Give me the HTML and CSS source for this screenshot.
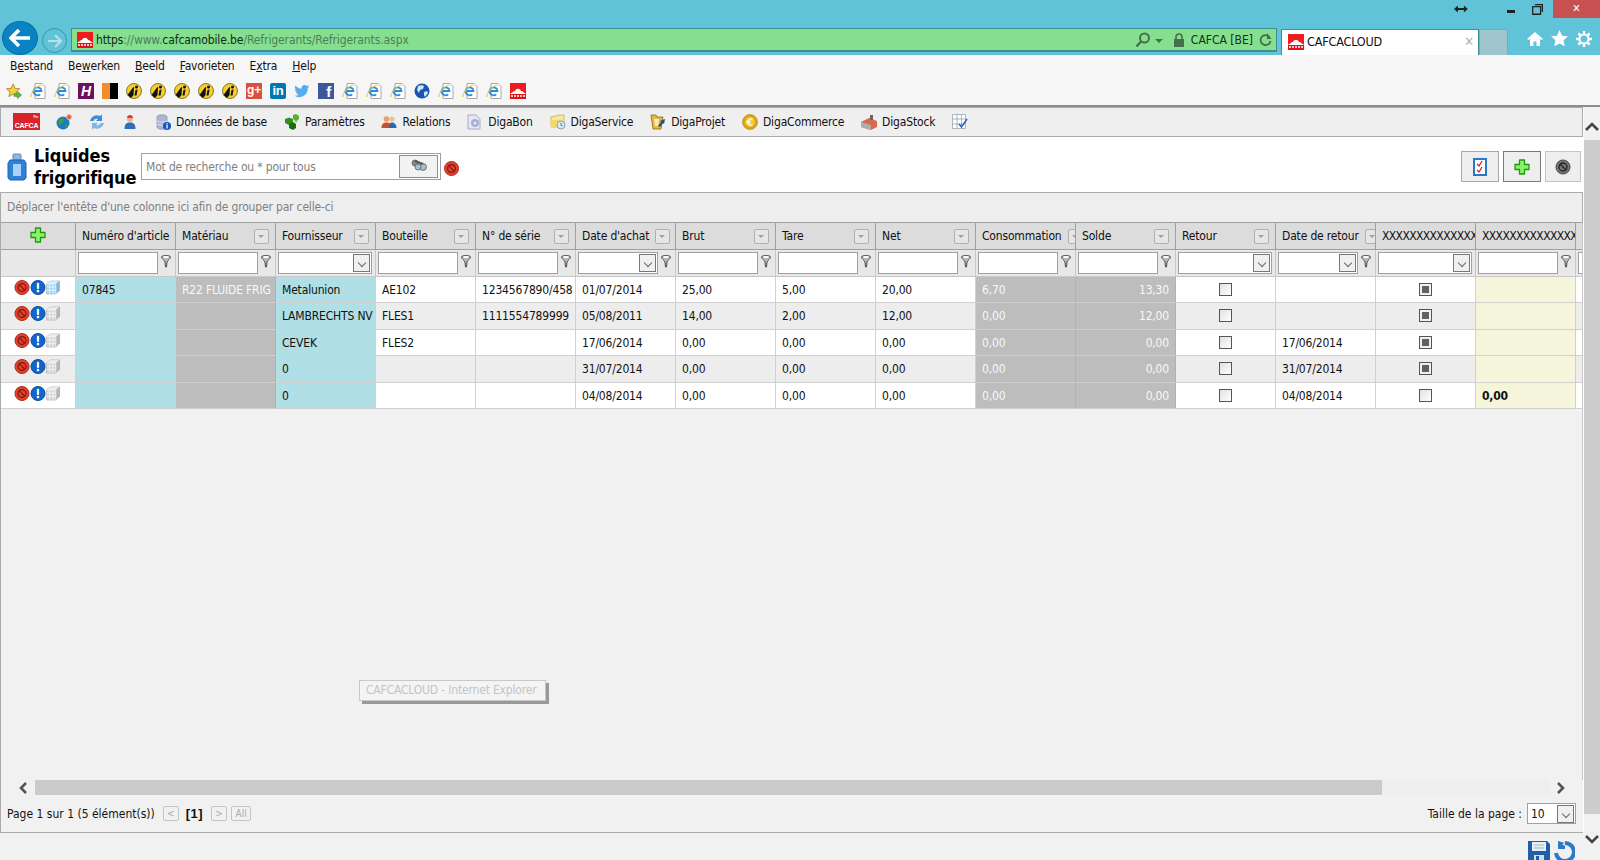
FILE: index.html
```html
<!DOCTYPE html>
<html lang="nl">
<head>
  <meta charset="UTF-8" />
  <title>CAFCACLOUD - Internet Explorer</title>
  <link rel="stylesheet" href="styles.css">
</head>
<body>
  <svg class="defs" width="0" height="0">
    <symbol id="cafca" viewBox="0 0 16 16"><rect width="16" height="16" fill="#ee1c1c"/><path d="M0 11c2-1 3-3 5-3 1-3 5-3 6 0 2 0 3 2 5 3z" fill="#fff"/><rect y="11" width="16" height="5" fill="#e01414"/><path d="M1 13h14" stroke="#fff" stroke-width="1.500" stroke-dasharray="2 1"/></symbol>
    <symbol id="ie" viewBox="0 0 16 16"><path d="M5 .5h7l3 3v12H5z" fill="#fff" stroke="#aaa"/><path d="M3.500 8h8a4 4 0 1 0-1.300 3.300" fill="none" stroke="#2a8fe0" stroke-width="1.800"/><path d="M1 14C0 11 6 3 11 2" fill="none" stroke="#f1c232" stroke-width="1.200"/></symbol>
    <symbol id="disc" viewBox="0 0 16 16"><circle cx="8" cy="8" r="7.500" fill="#f3cd2d" stroke="#8a7a20"/><path d="M1.500 12L7 4.500c1-1 1.500-.5 1 .5L7.500 12 5 15z" fill="#111"/><circle cx="10.500" cy="4" r="1.500" fill="#111"/><path d="M9.500 7l2-.5-1 6h-2z" fill="#111"/></symbol>
    <symbol id="starfav" viewBox="0 0 18 18"><path d="M8 1l2.200 5 5.300.5-4 3.500 1.200 5.300L8 12.500l-4.700 2.800L4.500 10l-4-3.500L5.800 6z" fill="#f3d04a" stroke="#b58a20"/><path d="M9 12h4v-2.500l4.500 4-4.500 4V15H9z" fill="#54b948" stroke="#2e8b2e" stroke-width=".6"/></symbol>
    <symbol id="globe" viewBox="0 0 16 16"><circle cx="8" cy="8" r="7.500" fill="#1a56b0"/><path d="M4 3c2-1 5-1 6 0L9 6 6 7 5 10 3 7zM10 9l3-1 1 2-3 4-1-2z" fill="#cfe6fa"/></symbol>
    <symbol id="netdot" viewBox="0 0 16 16"><circle cx="7" cy="9" r="6.500" fill="#1f7ac0"/><path d="M3 6c2-2 4-2 5-1L7 8 5 9 4 11 2 9zM9 11l2-1v2l-2 2z" fill="#3aa33a"/><circle cx="13" cy="3" r="2.500" fill="#e0603a" stroke="#f5b090"/></symbol>
    <symbol id="sync" viewBox="0 0 16 16"><path d="M1 7a7 7 0 0 1 10-5l2-1.500V7H7l2-2A3.500 3.500 0 0 0 4.500 7z" fill="#3b8ed8"/><path d="M15 9a7 7 0 0 1-10 5l-2 1.500V9h6l-2 2A3.500 3.500 0 0 0 11.500 9z" fill="#7bb8ea"/></symbol>
    <symbol id="person" viewBox="0 0 16 16"><circle cx="8" cy="5" r="3" fill="#f0b090"/><path d="M5 4c0-4 6-4 6 0z" fill="#d8402a"/><path d="M2.500 15c0-5 2-6.500 5.500-6.500s5.500 1.500 5.500 6.500z" fill="#2c6ebc"/></symbol>
    <symbol id="db" viewBox="0 0 16 16"><path d="M2 3c0-3 10-3 10 0v10c0 3-10 3-10 0z" fill="#a9b4d6" stroke="#7c86ac" stroke-width=".6"/><path d="M2 7c2 1.500 8 1.500 10 0M2 10c2 1.500 8 1.500 10 0" fill="none" stroke="#eef" stroke-width=".8"/><circle cx="12" cy="12" r="4" fill="#1457b8"/><rect x="11.400" y="11" width="1.300" height="3.500" fill="#fff"/><rect x="11.400" y="9.200" width="1.300" height="1.200" fill="#fff"/></symbol>
    <symbol id="cubes" viewBox="0 0 16 16"><path d="M9 1l3-1 3 2v3l-3 2-3-2z" fill="#58b030"/><path d="M1 5l4-1.500L9 5v4l-4 2-4-2z" fill="#2f8f20"/><path d="M5 10l4-2 3 2v4l-3 2-4-2z" fill="#1c6e16"/><path d="M9 5l3 2 3-2-3 4z" fill="#8ad050"/></symbol>
    <symbol id="people" viewBox="0 0 16 16"><circle cx="5.500" cy="5" r="2.800" fill="#e8a070"/><path d="M.5 14c0-4 2-5.500 5-5.500s5 1.500 5 5.500z" fill="#c8502a"/><circle cx="11" cy="5" r="2.500" fill="#f0c090"/><path d="M8 14c0-4 1-5.500 3-5.500s4.500 1.500 4.500 5.500z" fill="#2d68b8"/></symbol>
    <symbol id="docgear" viewBox="0 0 16 16"><path d="M1 1h8l4 4v10H1z" fill="#e4e8f4" stroke="#8a94b4" stroke-width=".7"/><circle cx="8" cy="9" r="4" fill="#a8aed0"/><circle cx="8" cy="9" r="1.500" fill="#e4e8f4"/></symbol>
    <symbol id="folderclock" viewBox="0 0 16 16"><path d="M1 3l8-2h5v10H1z" fill="#f5e6a0" stroke="#c9a83a" stroke-width=".7"/><path d="M0 6h12v8H1z" fill="#f3d76c"/><circle cx="11" cy="11" r="4" fill="#dbe8f5" stroke="#6d8fb5" stroke-width=".8"/><path d="M11 9v2.200l1.500.8" fill="none" stroke="#456" stroke-width=".8"/></symbol>
    <symbol id="folderarrow" viewBox="0 0 16 16"><path d="M1 1h5l1 2h6l-2 12H3z" fill="#e8b83e" stroke="#8a6a18" stroke-width=".8"/><path d="M4 5h5l-1 7H5z" fill="#f7eec0"/><path d="M8 12l3-4-1-1 5-2-1 5-1-1-3 4z" fill="#24508c"/></symbol>
    <symbol id="coin" viewBox="0 0 16 16"><circle cx="8" cy="8" r="7.500" fill="#d9a514" stroke="#b08010" stroke-width=".6"/><circle cx="8" cy="8" r="5" fill="#f0c838"/><path d="M10.500 5.500a3 3 0 1 0 0 5M4.500 7.200h4.500M4.500 8.800h4" fill="none" stroke="#fff" stroke-width="1.100"/></symbol>
    <symbol id="factory" viewBox="0 0 16 16"><path d="M0 8l8-4 8 3v6l-6 3-10-3z" fill="#d8694e"/><path d="M0 8l10 3v5L0 13z" fill="#aeaeae"/><rect x="9" y="1" width="3" height="5" fill="#666"/></symbol>
    <symbol id="gridcheck" viewBox="0 0 16 16"><path d="M.5.500h13v14H.5zM.5 5h13M.5 10h13M5 .5v14M9.500.5v14" fill="#fff" stroke="#8e96aa" stroke-width=".7"/><path d="M7 10l2.500 3L15 5" fill="none" stroke="#2a62c8" stroke-width="1.600"/></symbol>
    <symbol id="stop" viewBox="0 0 16 16"><circle cx="8" cy="8" r="7.500" fill="#e5402c" stroke="#a8261a"/><circle cx="8" cy="8" r="4.200" fill="none" stroke="#7c1a10" stroke-width="1.300"/><path d="M5 5l6 6" stroke="#7c1a10" stroke-width="1.300"/></symbol>
    <symbol id="stopgrey" viewBox="0 0 16 16"><circle cx="8" cy="8" r="7" fill="#777" stroke="#444"/><circle cx="8" cy="8" r="4" fill="none" stroke="#222" stroke-width="1.300"/><path d="M5 5l6 6" stroke="#222" stroke-width="1.300"/></symbol>
    <symbol id="info" viewBox="0 0 16 16"><circle cx="8" cy="8" r="7.500" fill="#0f66cc" stroke="#0b4aa0"/><rect x="6.800" y="3" width="2.400" height="6.500" rx="1" fill="#fff"/><circle cx="8" cy="11.800" r="1.400" fill="#fff"/></symbol>
    <symbol id="cube" viewBox="0 0 16 16"><path d="M1 4l4-3h10v10l-4 4H1z" fill="currentColor" stroke="#aaa" stroke-width=".6"/><path d="M1 4l4-3h10l-4 3z" fill="#fff" opacity=".5"/><path d="M11 4l4-3v10l-4 4z" fill="#000" opacity=".14"/><path d="M1 4h10v11M4.500 4v11M8 4v11M1 7.500h10M1 11h10" fill="none" stroke="#fff" stroke-width=".7"/></symbol>
    <symbol id="plus" viewBox="0 0 16 16"><path d="M5.500 1h5v4.500H15v5h-4.500V15h-5v-4.500H1v-5h4.500z" fill="#8cf06c" stroke="#1e9a12" stroke-width="1.300" stroke-linejoin="round"/></symbol>
    <symbol id="funnel" viewBox="0 0 10 13"><path d="M.5 2c0-2 9-2 9 0 0 2-3 3-3.500 5L5.500 12h-1L4 7C3.500 5 .5 4 .5 2z" fill="#bbb" stroke="#444" stroke-width=".9"/><ellipse cx="5" cy="2" rx="3" ry="1" fill="#fff"/></symbol>
    <symbol id="bottle" viewBox="0 0 20 28"><rect x="6" y="1" width="8" height="6" rx="1" fill="#8fb6e0" stroke="#5a8cc4"/><path d="M3 7h14l2 3v15l-2 2H3l-2-2V10z" fill="#2d82d8" stroke="#1a62b0"/><rect x="6" y="11" width="8" height="12" fill="#a8d2f6"/></symbol>
    <symbol id="binoc" viewBox="0 0 16 12"><circle cx="4" cy="4" r="3" fill="#888" stroke="#555" stroke-width=".7"/><circle cx="12" cy="8" r="3.500" fill="#a0c0d0" stroke="#555" stroke-width=".7"/><circle cx="7" cy="8" r="3" fill="#a0c0d0" stroke="#555" stroke-width=".7"/><path d="M4 2l8 3" stroke="#555" stroke-width="2"/></symbol>
    <symbol id="clip" viewBox="0 0 16 20"><rect x="2" y="2" width="12" height="16" fill="#fff" stroke="#2a78c8" stroke-width="2"/><path d="M5 7l2 2 3-5M5 13l2 2 3-5" fill="none" stroke="#d81e1e" stroke-width="1.200"/></symbol>
    <symbol id="floppy" viewBox="0 0 22 22"><path d="M0 0h19l3 3v19H0z" fill="#1f5fa8"/><rect x="4" y="1" width="14" height="9" fill="#e8eef5"/><path d="M6 4h10M6 7h10" stroke="#9fb6cc"/><rect x="6" y="14" width="10" height="8" fill="#d5dde5"/><rect x="8" y="15" width="3" height="6" fill="#1f5fa8"/></symbol>
    <symbol id="undo" viewBox="0 0 22 22"><path d="M12 2a9 9 0 1 1-9 10" fill="none" stroke="#2a7ac8" stroke-width="4"/><path d="M5 0v8h7V5L9 3l3-1z" fill="#2a7ac8"/></symbol>
    <symbol id="gear" viewBox="0 0 16 16"><circle cx="8" cy="8" r="4.500" fill="none" stroke="#fff" stroke-width="2"/><path d="M8 0v3M8 13v3M0 8h3M13 8h3M2.300 2.300l2.100 2.100M11.600 11.600l2.100 2.100M2.300 13.700l2.100-2.100M11.600 4.400l2.100-2.100" stroke="#fff" stroke-width="2.400"/></symbol>
  </svg>

  <header class="chrome">
    <div class="title-row">
      <svg class="win-resize" width="14" height="8" viewBox="0 0 14 8"><path d="M0 4l4-3.500v2.500h6V.5L14 4l-4 3.500V5H4v2.500z" fill="#222"/></svg>
      <span class="win-min"></span>
      <svg class="win-restore" width="12" height="12" viewBox="0 0 12 12"><path d="M3 1.500h7.500V9M.7 3.500h8v7.800h-8z" fill="none" stroke="#222" stroke-width="1.300"/></svg>
      <span class="win-close">✕</span>
    </div>
    <div class="nav-row">
      <button class="back-btn"><svg width="22" height="18" viewBox="0 0 22 18"><path d="M10 1L2 9l8 8M3 9h18" fill="none" stroke="#fff" stroke-width="3.600"/></svg></button>
      <button class="fwd-btn"><svg width="16" height="14" viewBox="0 0 16 14"><path d="M8 1l6 6-6 6M14 7H1" fill="none" stroke="#b9dfe8" stroke-width="2"/></svg></button>
      <div class="address">
        <svg class="i"><use href="#cafca"/></svg>
        <span class="url">https<i>://www.</i>cafcamobile.be<i>/Refrigerants/Refrigerants.aspx</i></span>
        <svg class="addr-search" width="16" height="16" viewBox="0 0 16 16"><circle cx="9.500" cy="6" r="4.500" fill="none" stroke="#44704c" stroke-width="2"/><path d="M6 9.500L1.500 14.500" stroke="#44704c" stroke-width="2.400"/></svg>
        <span class="caret"></span>
        <svg class="addr-lock" width="12" height="14" viewBox="0 0 12 14"><path d="M3 6V4a3 3 0 0 1 6 0v2" fill="none" stroke="#44704c" stroke-width="1.600"/><rect x="1" y="6" width="10" height="8" fill="#44704c"/></svg>
        <span class="addr-site">CAFCA [BE]</span>
        <svg class="addr-reload" width="13" height="14" viewBox="0 0 13 14"><path d="M10.500 4a5 5 0 1 0 1 4" fill="none" stroke="#44704c" stroke-width="1.800"/><path d="M8 0v6h4.500z" fill="#44704c"/></svg>
      </div>
      <div class="tab">
        <svg class="i"><use href="#cafca"/></svg>
        <span class="tab-title">CAFCACLOUD</span>
        <span class="tab-close">✕</span>
      </div>
      <div class="new-tab"></div>
      <div class="browser-tools">
        <svg width="16" height="16" viewBox="0 0 16 16"><path d="M8 1L0 8l1.500 1L3 7.800V15h3.500v-4.500h3V15H13V7.800L14.500 9 16 8z" fill="#fff"/></svg>
        <svg width="17" height="17" viewBox="0 0 16 16"><path d="M8 0l2.400 5.300 5.600.6-4.200 3.800 1.200 5.700L8 12.600 3 15.400l1.200-5.700L0 5.900l5.600-.6z" fill="#fff"/></svg>
        <svg width="16" height="16"><use href="#gear"/></svg>
      </div>
    </div>
  </header>

  <nav class="menubar">
    <span>B<u>e</u>stand</span>
    <span>Be<u>w</u>erken</span>
    <span><u>B</u>eeld</span>
    <span><u>F</u>avorieten</span>
    <span>E<u>x</u>tra</span>
    <span><u>H</u>elp</span>
  </nav>

  <div class="favbar">
    <svg class="fav"><use href="#starfav"/></svg>
    <svg class="fav"><use href="#ie"/></svg>
    <svg class="fav"><use href="#ie"/></svg>
    <span class="fav fav-h">H</span>
    <span class="fav fav-flag"></span>
    <svg class="fav"><use href="#disc"/></svg>
    <svg class="fav"><use href="#disc"/></svg>
    <svg class="fav"><use href="#disc"/></svg>
    <svg class="fav"><use href="#disc"/></svg>
    <svg class="fav"><use href="#disc"/></svg>
    <span class="fav fav-g">g+</span>
    <span class="fav fav-in">in</span>
    <svg class="fav" viewBox="0 0 24 24"><path fill="#55acee" d="M23 5.100c-.8.400-1.700.6-2.600.8.900-.6 1.600-1.400 2-2.500-.9.500-1.900.9-2.900 1.100a4.600 4.600 0 0 0-7.900 4.200C7.800 8.500 4.400 6.700 2.100 3.900a4.600 4.600 0 0 0 1.400 6.100c-.7 0-1.400-.2-2.100-.6 0 2.200 1.600 4.100 3.700 4.600-.7.200-1.400.2-2.100.1.600 1.800 2.300 3.100 4.300 3.200A9.300 9.300 0 0 1 .5 19.200a13 13 0 0 0 20-11.600c.9-.6 1.700-1.400 2.500-2.500z"/></svg>
    <span class="fav fav-f">f</span>
    <svg class="fav"><use href="#ie"/></svg>
    <svg class="fav"><use href="#ie"/></svg>
    <svg class="fav"><use href="#ie"/></svg>
    <svg class="fav"><use href="#globe"/></svg>
    <svg class="fav"><use href="#ie"/></svg>
    <svg class="fav"><use href="#ie"/></svg>
    <svg class="fav"><use href="#ie"/></svg>
    <svg class="fav"><use href="#cafca"/></svg>
  </div>

  <div class="main">
    <div class="content">
      <div class="toolbar">
        <span class="logo"><small>Pro</small>CAFCA</span>
        <svg class="i tool-solo"><use href="#netdot"/></svg>
        <svg class="i tool-solo"><use href="#sync"/></svg>
        <svg class="i tool-solo"><use href="#person"/></svg>
        <span class="tool"><svg class="i"><use href="#db"/></svg>Données de base</span>
        <span class="tool"><svg class="i"><use href="#cubes"/></svg>Paramètres</span>
        <span class="tool"><svg class="i"><use href="#people"/></svg>Relations</span>
        <span class="tool"><svg class="i"><use href="#docgear"/></svg>DigaBon</span>
        <span class="tool"><svg class="i"><use href="#folderclock"/></svg>DigaService</span>
        <span class="tool"><svg class="i"><use href="#folderarrow"/></svg>DigaProjet</span>
        <span class="tool"><svg class="i"><use href="#coin"/></svg>DigaCommerce</span>
        <span class="tool"><svg class="i"><use href="#factory"/></svg>DigaStock</span>
        <span class="tool"><svg class="i"><use href="#gridcheck"/></svg></span>
      </div>

      <div class="titlebar">
        <svg class="title-icon"><use href="#bottle"/></svg>
        <h1>Liquides<br>frigorifique</h1>
        <div class="search">
          <span class="search-text">Mot de recherche ou * pour tous</span>
          <button class="search-btn"><svg width="16" height="12"><use href="#binoc"/></svg></button>
        </div>
        <svg class="search-clear"><use href="#stop"/></svg>
        <div class="title-actions">
          <button class="act"><svg width="16" height="20"><use href="#clip"/></svg></button>
          <button class="act act-on"><svg class="i"><use href="#plus"/></svg></button>
          <button class="act"><svg class="i"><use href="#stopgrey"/></svg></button>
        </div>
      </div>

      <div class="panel">
        <div class="groupbar">Déplacer l'entête d'une colonne ici afin de grouper par celle-ci</div>
        <div class="grid-wrap">
          <table class="grid">
            <colgroup>
              <col class="col-act"><col><col><col><col><col><col><col><col><col><col><col><col><col><col><col><col>
            </colgroup>
            <thead>
              <tr class="head">
                <th class="add"><svg class="i"><use href="#plus"/></svg></th>
                <th><div class="h"><span>Numéro d'article</span><b class="sort"></b></div></th>
                <th><div class="h"><span>Matériau</span><b class="sort"></b></div></th>
                <th><div class="h"><span>Fournisseur</span><b class="sort"></b></div></th>
                <th><div class="h"><span>Bouteille</span><b class="sort"></b></div></th>
                <th><div class="h"><span>N° de série</span><b class="sort"></b></div></th>
                <th><div class="h"><span>Date d'achat</span><b class="sort"></b></div></th>
                <th><div class="h"><span>Brut</span><b class="sort"></b></div></th>
                <th><div class="h"><span>Tare</span><b class="sort"></b></div></th>
                <th><div class="h"><span>Net</span><b class="sort"></b></div></th>
                <th><div class="h"><span>Consommation</span><b class="sort"></b></div></th>
                <th><div class="h"><span>Solde</span><b class="sort"></b></div></th>
                <th><div class="h"><span>Retour</span><b class="sort"></b></div></th>
                <th><div class="h"><span>Date de retour</span><b class="sort"></b></div></th>
                <th><div class="h"><span class="xx">XXXXXXXXXXXXXXX</span></div></th>
                <th><div class="h"><span class="xx">XXXXXXXXXXXXXXX</span></div></th>
                <th></th>
              </tr>
              <tr class="filter">
                <td></td>
                <td><div class="f"><i class="inp"></i><svg class="fn"><use href="#funnel"/></svg></div></td>
                <td><div class="f"><i class="inp"></i><svg class="fn"><use href="#funnel"/></svg></div></td>
                <td><div class="f"><i class="combo"><b></b></i></div></td>
                <td><div class="f"><i class="inp"></i><svg class="fn"><use href="#funnel"/></svg></div></td>
                <td><div class="f"><i class="inp"></i><svg class="fn"><use href="#funnel"/></svg></div></td>
                <td><div class="f"><i class="combo short"><b></b></i><svg class="fn"><use href="#funnel"/></svg></div></td>
                <td><div class="f"><i class="inp"></i><svg class="fn"><use href="#funnel"/></svg></div></td>
                <td><div class="f"><i class="inp"></i><svg class="fn"><use href="#funnel"/></svg></div></td>
                <td><div class="f"><i class="inp"></i><svg class="fn"><use href="#funnel"/></svg></div></td>
                <td><div class="f"><i class="inp"></i><svg class="fn"><use href="#funnel"/></svg></div></td>
                <td><div class="f"><i class="inp"></i><svg class="fn"><use href="#funnel"/></svg></div></td>
                <td><div class="f"><i class="combo"><b></b></i></div></td>
                <td><div class="f"><i class="combo short"><b></b></i><svg class="fn"><use href="#funnel"/></svg></div></td>
                <td><div class="f"><i class="combo"><b></b></i></div></td>
                <td><div class="f"><i class="inp"></i><svg class="fn"><use href="#funnel"/></svg></div></td>
                <td><div class="f"><i class="inp"></i></div></td>
              </tr>
            </thead>
            <tbody>
              <tr>
                <td class="acts"><div><svg class="i14"><use href="#stop"/></svg><svg class="i14"><use href="#info"/></svg><svg class="i14 cube-on"><use href="#cube"/></svg></div></td>
                <td class="cy">07845</td><td class="gr bleed">R22 FLUIDE FRIG</td><td class="cy">Metalunion</td><td>AE102</td><td>1234567890/458</td><td>01/07/2014</td><td>25,00</td><td>5,00</td><td>20,00</td><td class="gr">6,70</td><td class="gr num">13,30</td>
                <td class="chk"><i class="box"></i></td><td></td><td class="chk"><i class="box on"></i></td><td class="ye"></td><td></td>
              </tr>
              <tr>
                <td class="acts"><div><svg class="i14"><use href="#stop"/></svg><svg class="i14"><use href="#info"/></svg><svg class="i14 cube-off"><use href="#cube"/></svg></div></td>
                <td class="cy"></td><td class="gr"></td><td class="cy bleed">LAMBRECHTS NV</td><td>FLES1</td><td>1111554789999</td><td>05/08/2011</td><td>14,00</td><td>2,00</td><td>12,00</td><td class="gr">0,00</td><td class="gr num">12,00</td>
                <td class="chk"><i class="box"></i></td><td></td><td class="chk"><i class="box on"></i></td><td class="ye"></td><td></td>
              </tr>
              <tr>
                <td class="acts"><div><svg class="i14"><use href="#stop"/></svg><svg class="i14"><use href="#info"/></svg><svg class="i14 cube-off"><use href="#cube"/></svg></div></td>
                <td class="cy"></td><td class="gr"></td><td class="cy">CEVEK</td><td>FLES2</td><td></td><td>17/06/2014</td><td>0,00</td><td>0,00</td><td>0,00</td><td class="gr">0,00</td><td class="gr num">0,00</td>
                <td class="chk"><i class="box"></i></td><td>17/06/2014</td><td class="chk"><i class="box on"></i></td><td class="ye"></td><td></td>
              </tr>
              <tr>
                <td class="acts"><div><svg class="i14"><use href="#stop"/></svg><svg class="i14"><use href="#info"/></svg><svg class="i14 cube-off"><use href="#cube"/></svg></div></td>
                <td class="cy"></td><td class="gr"></td><td class="cy">0</td><td></td><td></td><td>31/07/2014</td><td>0,00</td><td>0,00</td><td>0,00</td><td class="gr">0,00</td><td class="gr num">0,00</td>
                <td class="chk"><i class="box"></i></td><td>31/07/2014</td><td class="chk"><i class="box on"></i></td><td class="ye"></td><td></td>
              </tr>
              <tr>
                <td class="acts"><div><svg class="i14"><use href="#stop"/></svg><svg class="i14"><use href="#info"/></svg><svg class="i14 cube-off"><use href="#cube"/></svg></div></td>
                <td class="cy"></td><td class="gr"></td><td class="cy">0</td><td></td><td></td><td>04/08/2014</td><td>0,00</td><td>0,00</td><td>0,00</td><td class="gr">0,00</td><td class="gr num">0,00</td>
                <td class="chk"><i class="box"></i></td><td>04/08/2014</td><td class="chk"><i class="box"></i></td><td class="ye strong">0,00</td><td></td>
              </tr>
            </tbody>
          </table>
        </div>

        <div class="hscroll">
          <svg class="chev" width="10" height="12" viewBox="0 0 10 12"><path d="M8 1L3 6l5 5" fill="none" stroke="#555" stroke-width="2.600"/></svg>
          <div class="hscroll-track"><div class="hscroll-thumb"></div></div>
          <svg class="chev" width="10" height="12" viewBox="0 0 10 12"><path d="M2 1l5 5-5 5" fill="none" stroke="#555" stroke-width="2.600"/></svg>
        </div>

        <div class="pager">
          <span>Page 1 sur 1 (5 élément(s))</span>
          <span class="pg">&lt;</span>
          <b class="pg-cur">[1]</b>
          <span class="pg">&gt;</span>
          <span class="pg pg-all">All</span>
          <span class="page-size">Taille de la page :</span>
          <div class="size-select">10<b></b></div>
        </div>
      </div>

      <div class="savebar">
        <svg width="22" height="22"><use href="#floppy"/></svg>
        <svg width="22" height="22"><use href="#undo"/></svg>
      </div>
    </div>

    <div class="vscroll">
      <svg width="14" height="10" viewBox="0 0 14 10"><path d="M1 8l6-6 6 6" fill="none" stroke="#444" stroke-width="2.600"/></svg>
      <div class="vscroll-thumb"></div>
      <svg width="14" height="10" viewBox="0 0 14 10"><path d="M1 2l6 6 6-6" fill="none" stroke="#444" stroke-width="2.600"/></svg>
    </div>
  </div>

  <div class="tooltip">CAFCACLOUD - Internet Explorer</div>
</body>
</html>
```

FILE: styles.css
```css
* {
  box-sizing: border-box;
}

html, body {
  margin: 0;
  padding: 0;
}

body {
  position: relative;
  width: 1600px;
  height: 860px;
  overflow: hidden;
  display: flex;
  flex-direction: column;
  background: #fff;
  color: #111;
  font-family: "DejaVu Sans Condensed", "DejaVu Sans", sans-serif;
  font-stretch: condensed;
  font-size: 12px;
  letter-spacing: -0.17px;
}

button {
  padding: 0;
  font: inherit;
  cursor: pointer;
}

i {
  font-style: normal;
}

.defs {
  position: absolute;
}

.i {
  width: 16px;
  height: 16px;
  flex: none;
}

/* browser chrome */
.chrome {
  height: 55px;
  flex: none;
  background: #61c3d8;
}

.title-row {
  height: 21px;
  display: flex;
  align-items: flex-start;
}

.win-resize {
  margin: 5px 0 0 1454px;
}

.win-min {
  width: 8px;
  height: 3px;
  margin: 10px 0 0 39px;
  background: #222;
}

.win-restore {
  margin: 3px 0 0 17px;
}

.win-close {
  width: 48px;
  height: 18px;
  margin-left: 9px;
  background: #c75050;
  color: #fff;
  font-size: 11px;
  line-height: 18px;
  text-align: center;
}

.nav-row {
  height: 34px;
  display: flex;
  align-items: flex-end;
}

.back-btn {
  width: 36px;
  height: 34px;
  margin-left: 2px;
  border: 1px solid #0a6ea8;
  border-radius: 50%;
  background: #0a83c4;
  display: flex;
  align-items: center;
  justify-content: center;
}

.fwd-btn {
  width: 25px;
  height: 25px;
  margin: 0 4px 2px 4px;
  border: 1px solid #3d93ac;
  border-radius: 50%;
  background: #61c3d8;
  display: flex;
  align-items: center;
  justify-content: center;
}

.address {
  width: 1206px;
  height: 24px;
  margin-bottom: 3px;
  padding: 0 4px 0 5px;
  display: flex;
  align-items: center;
  background: #86df8f;
  border: 1px solid #3f8f97;
  border-bottom-width: 2px;
}

.url {
  margin-left: 3px;
  flex: 1;
  font-size: 12px;
  color: #0e2a14;
  letter-spacing: -0.1px;
}

.url i {
  color: #4a7f58;
}

.caret {
  width: 0;
  height: 0;
  margin: 2px 10px 0 4px;
  border: 4px solid transparent;
  border-top-color: #44704c;
  border-bottom: 0;
}

.addr-site {
  margin: 0 6px;
  color: #123018;
  letter-spacing: 0;
}

.tab {
  width: 198px;
  height: 26px;
  margin-left: 4px;
  padding: 0 4px 2px 6px;
  display: flex;
  align-items: center;
  background: #fff;
  border: 1px solid #3f8f97;
  border-bottom: 0;
}

.tab-title {
  flex: 1;
  margin-left: 3px;
  font-size: 12.5px;
}

.tab-close {
  color: #b4b4b4;
  font-size: 13px;
  font-weight: bold;
}

.new-tab {
  width: 29px;
  height: 26px;
  background: #9ec5cc;
  border: 1px solid #6fb0bd;
  border-bottom: 0;
}

.browser-tools {
  display: flex;
  align-items: center;
  gap: 8px;
  height: 33px;
  margin-left: 19px;
}

.menubar {
  height: 23px;
  flex: none;
  padding: 0 0 2px 10px;
  display: flex;
  align-items: center;
  gap: 15px;
  background: #f6f6f6;
}

.favbar {
  height: 29px;
  flex: none;
  padding: 0 0 2px 6px;
  display: flex;
  align-items: center;
  gap: 8px;
  background: #f6f6f6;
  border-bottom: 2px solid #8d8d8d;
}

.fav {
  width: 16px;
  height: 16px;
  flex: none;
  color: #fff;
  text-align: center;
  font-family: "Liberation Sans", sans-serif;
  font-weight: bold;
}

.fav-h {
  background: #6e1060;
  font-size: 14px;
  font-style: italic;
  line-height: 16px;
}

.fav-flag {
  background: linear-gradient(90deg, #f28c28 50%, #000 50%);
}

.fav-g {
  background: #dc4e41;
  font-size: 12px;
  line-height: 14px;
}

.fav-in {
  background: #0077b5;
  font-size: 13px;
  line-height: 15px;
  border-radius: 2px;
}

.fav-f {
  background: #3b5998;
  font-size: 15px;
  line-height: 17px;
  text-align: right;
  padding-right: 3px;
}

/* page */
.main {
  flex: 1;
  min-height: 0;
  display: flex;
}

.content {
  width: 1584px;
  display: flex;
  flex-direction: column;
}

.vscroll {
  width: 16px;
  padding-top: 15px;
  display: flex;
  flex-direction: column;
  align-items: center;
  background: #f1f1f1;
}

.vscroll-thumb {
  width: 16px;
  height: 674px;
  margin: 8px 0 20px;
  background: #cdcdcd;
}

.toolbar {
  width: 1583px;
  height: 30px;
  flex: none;
  padding: 0 0 1px 12px;
  display: flex;
  align-items: center;
  background: #efefef;
  border: 1px solid #aaa;
}

.logo {
  width: 27px;
  height: 17px;
  margin-right: 16px;
  background: #d8232a;
  color: #fff;
  font-family: "Liberation Sans", sans-serif;
  font-size: 7px;
  font-weight: bold;
  line-height: 7px;
  text-align: center;
}

.logo small {
  display: block;
  height: 9px;
  padding-right: 2px;
  font-size: 3px;
  line-height: 9px;
  text-align: right;
}

.tool-solo {
  margin-right: 17px;
}

.tool {
  display: flex;
  align-items: center;
  gap: 5px;
  margin-right: 16.8px;
}

.titlebar {
  height: 55px;
  flex: none;
  padding-left: 7px;
  display: flex;
  align-items: center;
}

.title-icon {
  width: 20px;
  height: 28px;
  flex: none;
  margin-top: 4px;
}

h1 {
  width: 107px;
  margin: 5px 0 0 7px;
  font-size: 18px;
  font-weight: bold;
  line-height: 22px;
  color: #000;
  letter-spacing: -0.1px;
}

.search {
  width: 300px;
  height: 27px;
  margin-top: 4px;
  padding: 1px;
  display: flex;
  align-items: center;
  background: #fff;
  border: 1px solid #a0a0a0;
}

.search-text {
  flex: 1;
  padding-left: 3px;
  color: #808080;
}

.search-btn {
  width: 39px;
  height: 23px;
  margin-right: 1px;
  background: #f2f2f2;
  border: 1px solid #8f8f8f;
}

.search-clear {
  width: 15px;
  height: 15px;
  margin: 8px 0 0 3px;
}

.title-actions {
  margin: 4px 3px 0 auto;
  display: flex;
  gap: 4px;
}

.act {
  width: 38px;
  height: 31px;
  display: flex;
  align-items: center;
  justify-content: center;
  background: #eee;
  border: 1px solid #a8a8a8;
}

.act-on {
  border-color: #7a7a7a;
}

.act:last-child {
  width: 36px;
  border-color: #c4c4c4;
}

/* grid panel */
.panel {
  width: 1583px;
  height: 641px;
  flex: none;
  display: flex;
  flex-direction: column;
  background: #f1f1f1;
  border: 1px solid #aaa;
  border-right: 0;
}

.groupbar {
  height: 29px;
  flex: none;
  padding: 0 0 1px 6px;
  display: flex;
  align-items: center;
  background: #eee;
  border-right: 1px solid #aaa;
  color: #808080;
}

.grid-wrap {
  flex: 1;
  min-height: 0;
  overflow: hidden;
  border-right: 1px solid #c8c8c8;
}

.grid {
  width: 1675px;
  table-layout: fixed;
  border-collapse: separate;
  border-spacing: 0;
}

.grid col {
  width: 100px;
}

.grid col.col-act {
  width: 75px;
}

.head th {
  height: 28px;
  padding: 0;
  background: #dcdcdc;
  border-top: 1px solid #a0a0a0;
  border-bottom: 1px solid #a0a0a0;
  border-right: 1px solid #a0a0a0;
  font-weight: normal;
  text-align: left;
}

.head .add {
  text-align: center;
  vertical-align: top;
  padding-top: 4px;
}

.h {
  height: 26px;
  padding: 0 6px;
  display: flex;
  align-items: center;
  gap: 6px;
  overflow: hidden;
  white-space: nowrap;
}

.h span {
  flex: none;
}

.h .xx {
  letter-spacing: -0.6px;
}

.sort {
  width: 15px;
  height: 15px;
  flex: none;
  margin-left: auto;
  background: #e6e6e6;
  border: 1px solid #b0b0b0;
  border-radius: 2px;
  position: relative;
}

.sort::after {
  content: "";
  position: absolute;
  left: 3px;
  top: 5px;
  border: 3.500px solid transparent;
  border-top-color: #a0a0a0;
  border-bottom: 0;
}

.filter td {
  height: 27px;
  padding: 0;
  background: #e8e8e8;
  border-bottom: 1px solid #c8c8c8;
  border-right: 1px solid #c8c8c8;
}

.f {
  height: 26px;
  padding: 0 2px;
  display: flex;
  align-items: center;
  overflow: hidden;
}

.inp {
  width: 80px;
  height: 22px;
  flex: none;
  background: #fff;
  border: 1px solid #a0a0a0;
}

.fn {
  width: 10px;
  height: 13px;
  flex: none;
  margin: -4px 0 0 3px;
}

.combo {
  width: 94px;
  height: 22px;
  flex: none;
  padding: 1px;
  display: flex;
  justify-content: flex-end;
  background: #fff;
  border: 1px solid #a0a0a0;
}

.combo.short {
  width: 80px;
}

.combo b, .size-select b {
  width: 17px;
  height: 18px;
  position: relative;
  background: #f0f0f0;
  border: 1px solid #777;
}

.combo b::after, .size-select b::after {
  content: "";
  position: absolute;
  left: 5px;
  top: 5px;
  width: 5px;
  height: 5px;
  border-right: 1px solid #666;
  border-bottom: 1px solid #666;
  transform: rotate(45deg);
}

.grid tbody td {
  height: 26px;
  padding: 0 6px;
  background: #fff;
  border-bottom: 1px solid #d0d0d0;
  border-right: 1px solid #d0d0d0;
  white-space: nowrap;
  overflow: hidden;
}

.grid tbody tr:nth-child(even) td {
  height: 27px;
  background: #ededed;
}

.grid tbody td.cy,
.grid tbody tr:nth-child(even) td.cy {
  background: #b0dfe5;
}

.grid tbody td.gr,
.grid tbody tr:nth-child(even) td.gr {
  background: #bdbdbd;
  color: #f8f8f8;
  border-right-color: #b0b0b0;
}

.grid tbody td.ye,
.grid tbody tr:nth-child(even) td.ye {
  background: #f5f5dc;
}

.grid tbody td.bleed {
  padding-right: 0;
}

.num {
  text-align: right;
}

.strong {
  font-weight: bold;
}

.grid tbody td.acts {
  padding: 0;
  vertical-align: top;
}

.acts div {
  padding: 3px 0 0 13px;
  display: flex;
}

.i14 {
  width: 16px;
  height: 15px;
  flex: none;
}

.i14 + .i14 + .i14 {
  margin-left: -1px;
}

.cube-on {
  color: #9fd8f5;
}

.cube-off {
  color: #d4d4d4;
}

.chk {
  text-align: center;
}

.box {
  display: inline-block;
  width: 13px;
  height: 13px;
  margin-top: -2px;
  vertical-align: middle;
  background: linear-gradient(135deg, #e0e0e0, #fff);
  border: 1px solid #555;
}

.box.on {
  padding: 2px;
  background: #f0f0f0;
  background-clip: padding-box;
  position: relative;
}

.box.on::after {
  content: "";
  display: block;
  width: 7px;
  height: 7px;
  background: #606060;
}

.hscroll {
  height: 15px;
  flex: none;
  padding-left: 17px;
  display: flex;
  align-items: center;
}

.hscroll .chev {
  flex: none;
}

.hscroll-track {
  width: 1514px;
  height: 15px;
  flex: none;
  margin: 0 7px;
  background: #eee;
}

.hscroll-thumb {
  width: 1347px;
  height: 15px;
  background: #cacaca;
}

.pager {
  height: 37px;
  flex: none;
  padding: 0 7px 0 6px;
  display: flex;
  align-items: center;
  letter-spacing: 0;
}

.pg {
  width: 16px;
  height: 15px;
  margin-left: 8px;
  color: #aaa;
  border: 1px solid #c4c4c4;
  border-radius: 2px;
  font-size: 10px;
  line-height: 13px;
  text-align: center;
}

.pg-cur {
  margin-left: 7px;
  font-family: "Liberation Sans", sans-serif;
  font-size: 13px;
  letter-spacing: 0.5px;
}

.pg-all {
  width: 20px;
  margin-left: 4px;
}

.page-size {
  margin-left: auto;
}

.size-select {
  width: 49px;
  height: 21px;
  margin-left: 5px;
  padding: 1px 1px 1px 3px;
  display: flex;
  align-items: center;
  justify-content: space-between;
  background: #fff;
  border: 1px solid #a0a0a0;
}

.savebar {
  flex: 1;
  min-height: 0;
  padding: 8px 9px 0 0;
  display: flex;
  justify-content: flex-end;
  gap: 3px;
  background: #f1f1f1;
  overflow: hidden;
}

.savebar svg {
  flex: none;
}

.tooltip {
  position: absolute;
  left: 359px;
  top: 680px;
  width: 187px;
  height: 21px;
  padding-left: 6px;
  background: #f4f4f4;
  border: 1px solid #c8c8c8;
  box-shadow: 3px 3px 0 #999;
  color: #c4c4c4;
  line-height: 19px;
}
```
